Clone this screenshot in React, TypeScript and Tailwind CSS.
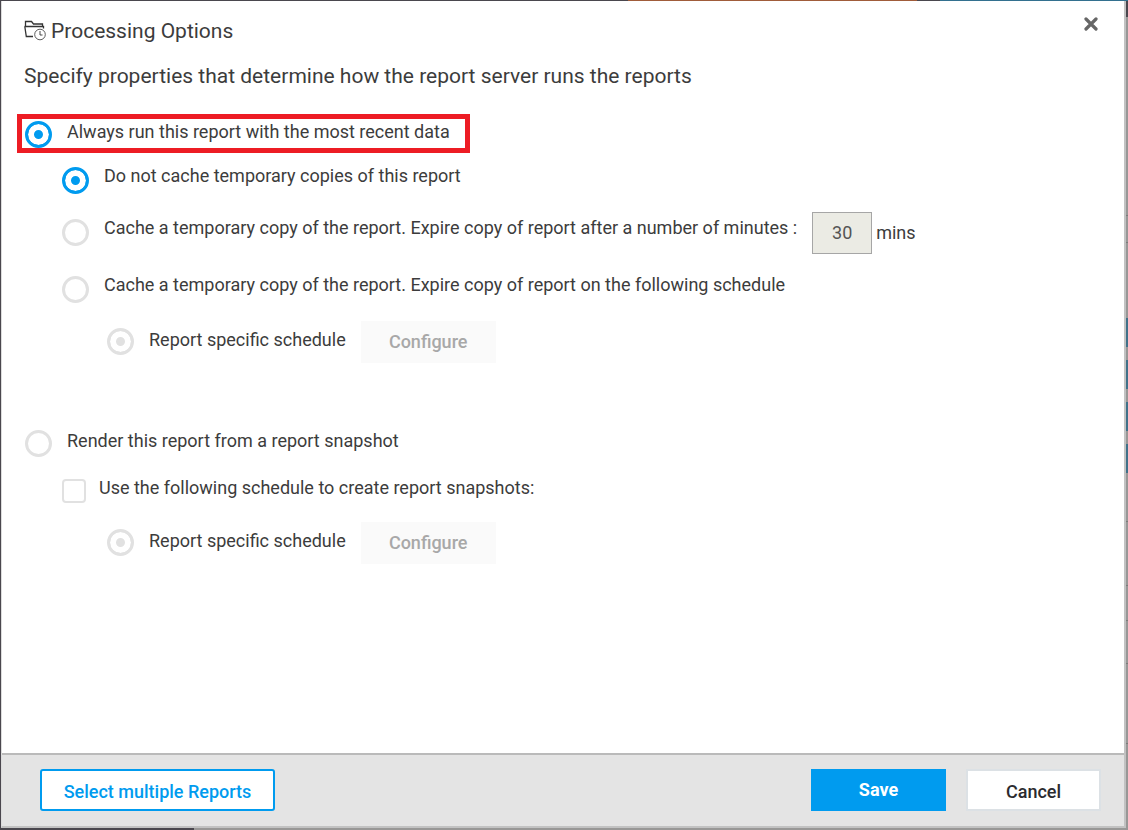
import React from "react";

const radioClass =
  "m-0 size-[27px] shrink-0 appearance-none rounded-full border-3 border-[#e1e1e1] bg-white checked:border-[#009bef] checked:bg-[#009bef] checked:shadow-[inset_0_0_0_6px_white] disabled:checked:border-[#e1e1e1] disabled:checked:bg-[#e1e1e1]";

type RadioProps = {
  name: string;
  label: string;
  checked?: boolean;
  disabled?: boolean;
  className: string;
  textClass?: string;
  dotClass?: string;
};

function Radio({ name, label, checked, disabled, className, textClass = "", dotClass = "" }: RadioProps) {
  return (
    <label className={`flex w-fit items-start gap-[15px] ${className}`}>
      <input type="radio" name={name} defaultChecked={checked} disabled={disabled} className={`${radioClass} ${dotClass}`} />
      <span className={textClass}>{label}</span>
    </label>
  );
}

function ScheduleRow({ name, className }: { name: string; className: string }) {
  return (
    <div className={`flex items-center gap-[15px] pl-[90px] ${className}`}>
      <Radio name={name} label="Report specific schedule" checked disabled className="pb-px" textClass="pt-0.5" />
      <button type="button" disabled className="h-[42px] w-[135px] bg-[#fafafa] font-medium text-[#a8a8a8]">
        Configure
      </button>
    </div>
  );
}

function FolderClockIcon() {
  return (
    <svg width="22" height="22" viewBox="0 0 22 22" fill="none" stroke="#333333" aria-hidden="true">
      <path d="M1.5 6.5V1.5H7.5L9.5 4H18.5V6.5M0.5 6.5H19.5V8.5M0.8 6.5L2.3 16.5H9" strokeWidth="1.3" />
      <circle cx="16" cy="14.5" r="5.3" strokeWidth="0.8" />
      <path d="M16 11V15H18.5" strokeWidth="0.9" />
    </svg>
  );
}

export default function App() {
  return (
    <div className="flex min-h-screen flex-col bg-[#4a474e] font-['Roboto',sans-serif] text-lg/5 text-[#3c3c3c]">
      <div className="flex h-px">
        <div className="w-[628px]" />
        <div className="w-[289px] bg-[#a05c3a]" />
        <div className="w-[23px]" />
        <div className="flex-1 bg-[#33708f]" />
      </div>

      <div className="flex flex-1 pl-px">
        <section
          role="dialog"
          aria-labelledby="dialog-title"
          className="flex flex-1 flex-col border-r-2 border-b-2 border-l border-[#c2c2c2] border-l-[#dcdcdc] bg-white"
        >
          <header className="flex items-start justify-between pt-4 pr-6 pl-[22px]">
            <h1 id="dialog-title" className="flex items-center gap-[5px] text-[21px]/7">
              <FolderClockIcon />
              Processing Options
            </h1>
            <button type="button" aria-label="Close" className="px-0.5">
              <svg width="14" height="14" viewBox="0 0 14 14" stroke="#666666" strokeWidth="3.2" strokeLinecap="round">
                <path d="M2 2L12 12M12 2L2 12" />
              </svg>
            </button>
          </header>
          <p className="mt-[17px] px-[22px] text-[21px]/7">
            Specify properties that determine how the report server runs the reports
          </p>

          <main className="flex-1 px-[15px] pt-6 pb-6">
            <Radio
              name="mode"
              label="Always run this report with the most recent data"
              checked
              className="border-5 border-[#ed1c24] pt-0.5 pr-[15px] pl-[3px]"
              textClass="pt-px"
            />
            <Radio
              name="cache"
              label="Do not cache temporary copies of this report"
              checked
              className="mt-[13px] ml-[45px]"
              dotClass="mt-px"
            />
            <div className="mt-[18px] ml-[45px] flex items-start">
              <Radio
                name="cache"
                label="Cache a temporary copy of the report. Expire copy of report after a number of minutes :"
                className="pt-1.5"
                dotClass="mt-px"
              />
              <input
                type="text"
                aria-label="Minutes"
                defaultValue="30"
                disabled
                className="ml-[15px] h-[42px] w-[60px] border border-[#a6a6a6] bg-[#ebebe4] pb-0.5 text-center text-[#545454]"
              />
              <span className="ml-1 leading-[42px]">mins</span>
            </div>
            <Radio
              name="cache"
              label="Cache a temporary copy of the report. Expire copy of report on the following schedule"
              className="mt-[21px] ml-[45px]"
              dotClass="mt-px"
            />
            <ScheduleRow name="cache-schedule" className="mt-[18px]" />

            <Radio
              name="mode"
              label="Render this report from a report snapshot"
              className="mt-[67px] ml-2"
              textClass="pt-px"
            />
            <label className="mt-[21px] ml-[45px] flex w-fit items-start gap-[13px]">
              <input
                type="checkbox"
                className="m-0 mt-px size-6 shrink-0 appearance-none rounded border-2 border-[#e1e1e1] bg-white checked:bg-[#009bef]"
              />
              <span>Use the following schedule to create report snapshots:</span>
            </label>
            <ScheduleRow name="snapshot-schedule" className="mt-[19px]" />
          </main>

          <footer className="flex items-center border-t-2 border-[#bababa] bg-[#e4e4e4] pt-3.5 pr-[23px] pb-[15px] pl-[38px] font-medium">
            <button type="button" className="h-[42px] w-[235px] rounded-[3px] border-2 border-[#009bef] bg-white pt-1 text-[#009bef]">
              Select multiple Reports
            </button>
            <button type="button" className="ml-auto h-[42px] w-[135px] bg-[#009bef] font-bold text-white">
              Save
            </button>
            <button type="button" className="ml-5 h-[42px] w-[135px] border-2 border-[#dce1e5] bg-white pt-1 text-[#2b2b2f]">
              Cancel
            </button>
          </footer>
        </section>

        <div className="flex w-0.5 flex-col bg-[#989796]">
          <div className="h-4 bg-[#4a474e]" />
          <div className="mt-[198px] h-px bg-[#7c7b7a]" />
          <div className="mt-[26px] h-px bg-[#7c7b7a]" />
          <div className="mt-[75px] flex flex-col gap-[13px]">
            <div className="h-[29px] bg-[#3f7189]" />
            <div className="h-[29px] bg-[#3f7189]" />
            <div className="h-[29px] bg-[#3f7189]" />
            <div className="h-[29px] bg-[#3f7189]" />
          </div>
          <div className="mt-12 h-px bg-[#7c7b7a]" />
          <div className="mt-[63px] h-px bg-[#7c7b7a]" />
          <div className="mt-[34px] h-px bg-[#7c7b7a]" />
          <div className="mt-[42px] h-px bg-[#7c7b7a]" />
          <div className="mt-[79px] h-px bg-[#7c7b7a]" />
        </div>
      </div>

      <div className="flex h-0.5">
        <div className="w-[194px]" />
        <div className="flex-1 bg-[#989796]" />
      </div>
    </div>
  );
}
